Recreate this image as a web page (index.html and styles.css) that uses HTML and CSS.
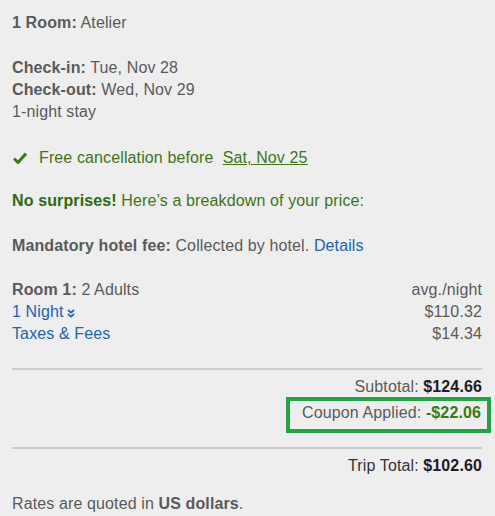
FILE: index.html
```html
<!DOCTYPE html>
<html>
<head>
<meta charset="utf-8">
<link rel="stylesheet" href="styles.css">
</head>
<body>
<div class="summary">
  <p class="line room"><b>1 Room:</b> Atelier</p>

  <div class="block stay">
    <p class="line"><b>Check-in:</b> Tue, Nov 28</p>
    <p class="line"><b>Check-out:</b> Wed, Nov 29</p>
    <p class="line">1-night stay</p>
  </div>

  <p class="line cancel">
    <svg class="check" width="14" height="12" viewBox="0 0 14 12"><path d="M1 6.5 L5 10.5 L13 1.5" fill="none" stroke="#3b7a12" stroke-width="3"/></svg>
    <span class="cancel-text">Free cancellation before&nbsp; <a class="cancel-link" href="#">Sat, Nov 25</a></span>
  </p>

  <p class="line green"><b>No surprises!</b> Here’s a breakdown of your price:</p>

  <p class="line fee"><b>Mandatory hotel fee:</b> Collected by hotel. <a class="link" href="#">Details</a></p>

  <div class="block prices">
    <div class="row"><span><b>Room 1:</b> 2 Adults</span><span>avg./night</span></div>
    <div class="row"><a class="link" href="#">1 Night<svg class="chev" width="8" height="9" viewBox="0 0 8 9"><path d="M1 1 L4 3.6 L7 1 M1 5 L4 7.6 L7 5" fill="none" stroke="#1f63b0" stroke-width="1.8"/></svg></a><span>$110.32</span></div>
    <div class="row"><a class="link" href="#">Taxes &amp; Fees</a><span>$14.34</span></div>
  </div>

  <div class="totals">
    <div class="total-row">Subtotal: <b class="dark">$124.66</b></div>
    <div class="total-row coupon-row"><span class="coupon">Coupon Applied: <b class="discount">-$22.06</b></span></div>
  </div>

  <div class="totals trip">
    <div class="total-row trip-row">Trip Total: <b class="dark">$102.60</b></div>
  </div>

  <p class="line rates">Rates are quoted in <b>US dollars</b>.</p>
</div>
</body>
</html>
```

FILE: styles.css
```css
html, body {
  margin: 0;
  padding: 0;
  background: #eeeeee;
}
body {
  font-family: "Liberation Sans", Arial, sans-serif;
  font-size: 16px;
  line-height: 22px;
  letter-spacing: 0.12px;
  color: #5a5a5a;
}
.summary {
  width: 470px;
  padding: 12px 0 0 12px;
}
p { margin: 0; }
b { font-weight: bold; }
.line { margin: 0; }
.stay { margin-top: 23px; }
.cancel {
  margin-top: 24px;
  display: flex;
  align-items: center;
  gap: 12px;
  color: #3f7419;
}
.check { margin-left: 1px; }
.cancel-link { color: #3f7419; text-decoration: underline; }
.green { margin-top: 21px; color: #3f7419; }
.green b { color: #2f6a0c; }
.fee { margin-top: 23px; }
.link { color: #2164ad; text-decoration: none; }
.prices { margin-top: 22px; }
.row {
  display: flex;
  justify-content: space-between;
}
.chev { margin-left: 3px; vertical-align: -1px; }
.totals {
  margin-top: 23px;
  border-top: 2px solid #cccccc;
  padding-top: 6px;
}
.total-row {
  text-align: right;
}
.trip-row { color: #333333; }
.dark { color: #1e1a2a; }
.coupon-row {
  margin-top: -1px;
  display: flex;
  justify-content: flex-end;
  margin-right: -9px;
}
.coupon {
  display: inline-block;
  border: 4px solid #22a446;
  padding: 1px 6px 5px 12px;
}
.discount { color: #3b7a12; }
.trip { margin-top: 14px; }
.rates { margin-top: 16px; }
```
